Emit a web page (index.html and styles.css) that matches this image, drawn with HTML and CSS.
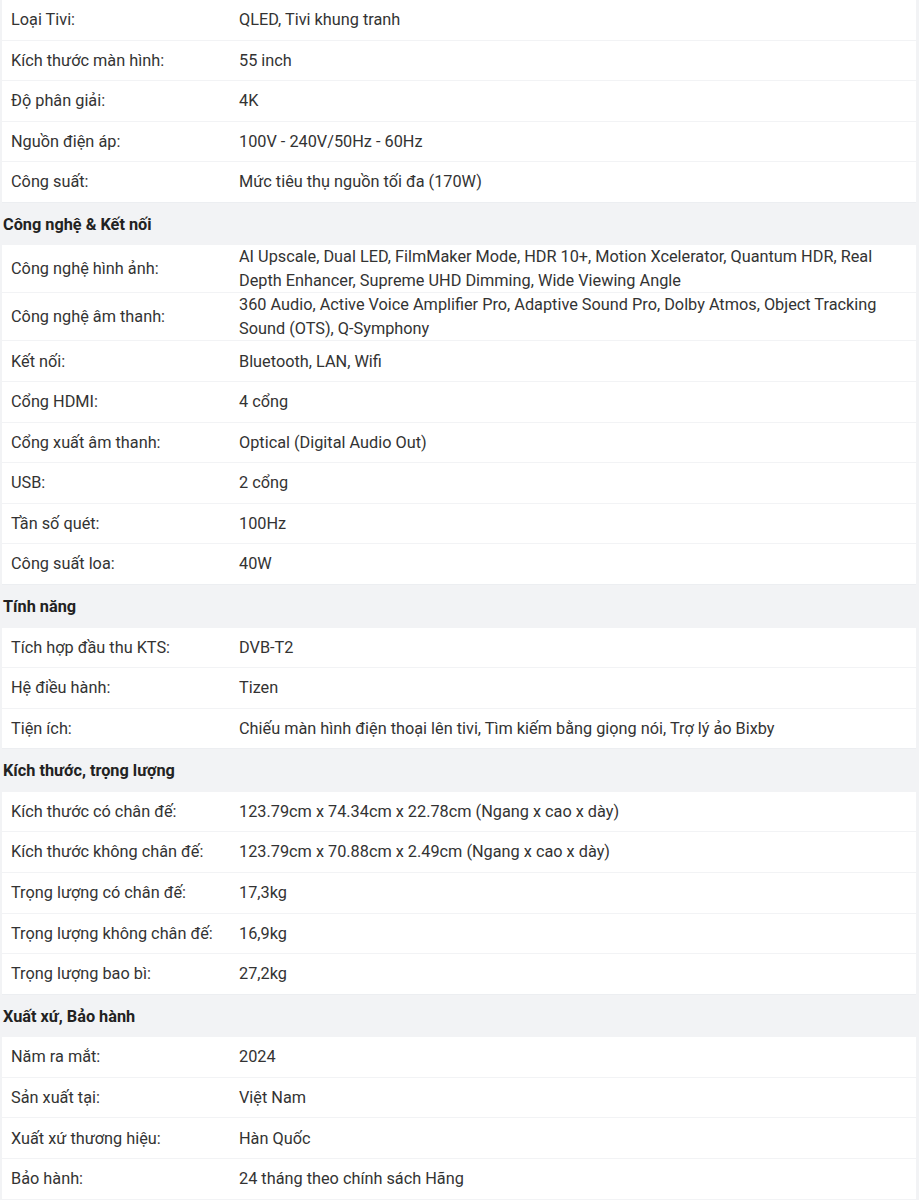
FILE: index.html
```html
<!DOCTYPE html>
<html lang="vi">
<head>
<meta charset="utf-8">
<title>Thông số kỹ thuật</title>
<link rel="stylesheet" href="styles.css">
</head>
<body>
<div class="specs">
  <ul class="group">
    <li class="row"><span class="label">Loại Tivi:</span><span class="value">QLED, Tivi khung tranh</span></li>
    <li class="row"><span class="label">Kích thước màn hình:</span><span class="value">55 inch</span></li>
    <li class="row"><span class="label">Độ phân giải:</span><span class="value">4K</span></li>
    <li class="row"><span class="label">Nguồn điện áp:</span><span class="value">100V - 240V/50Hz - 60Hz</span></li>
    <li class="row"><span class="label">Công suất:</span><span class="value">Mức tiêu thụ nguồn tối đa (170W)</span></li>
  </ul>
  <h3 class="title">Công nghệ &amp; Kết nối</h3>
  <ul class="group">
    <li class="row"><span class="label">Công nghệ hình ảnh:</span><span class="value">AI Upscale, Dual LED, FilmMaker Mode, HDR 10+, Motion Xcelerator, Quantum HDR, Real Depth Enhancer, Supreme UHD Dimming, Wide Viewing Angle</span></li>
    <li class="row"><span class="label">Công nghệ âm thanh:</span><span class="value">360 Audio, Active Voice Amplifier Pro, Adaptive Sound Pro, Dolby Atmos, Object Tracking Sound (OTS), Q-Symphony</span></li>
    <li class="row"><span class="label">Kết nối:</span><span class="value">Bluetooth, LAN, Wifi</span></li>
    <li class="row"><span class="label">Cổng HDMI:</span><span class="value">4 cổng</span></li>
    <li class="row"><span class="label">Cổng xuất âm thanh:</span><span class="value">Optical (Digital Audio Out)</span></li>
    <li class="row"><span class="label">USB:</span><span class="value">2 cổng</span></li>
    <li class="row"><span class="label">Tần số quét:</span><span class="value">100Hz</span></li>
    <li class="row"><span class="label">Công suất loa:</span><span class="value">40W</span></li>
  </ul>
  <h3 class="title">Tính năng</h3>
  <ul class="group">
    <li class="row"><span class="label">Tích hợp đầu thu KTS:</span><span class="value">DVB-T2</span></li>
    <li class="row"><span class="label">Hệ điều hành:</span><span class="value">Tizen</span></li>
    <li class="row"><span class="label">Tiện ích:</span><span class="value">Chiếu màn hình điện thoại lên tivi, Tìm kiếm bằng giọng nói, Trợ lý ảo Bixby</span></li>
  </ul>
  <h3 class="title">Kích thước, trọng lượng</h3>
  <ul class="group">
    <li class="row"><span class="label">Kích thước có chân đế:</span><span class="value">123.79cm x 74.34cm x 22.78cm (Ngang x cao x dày)</span></li>
    <li class="row"><span class="label">Kích thước không chân đế:</span><span class="value">123.79cm x 70.88cm x 2.49cm (Ngang x cao x dày)</span></li>
    <li class="row"><span class="label">Trọng lượng có chân đế:</span><span class="value">17,3kg</span></li>
    <li class="row"><span class="label">Trọng lượng không chân đế:</span><span class="value">16,9kg</span></li>
    <li class="row"><span class="label">Trọng lượng bao bì:</span><span class="value">27,2kg</span></li>
  </ul>
  <h3 class="title">Xuất xứ, Bảo hành</h3>
  <ul class="group">
    <li class="row"><span class="label">Năm ra mắt:</span><span class="value">2024</span></li>
    <li class="row"><span class="label">Sản xuất tại:</span><span class="value">Việt Nam</span></li>
    <li class="row"><span class="label">Xuất xứ thương hiệu:</span><span class="value">Hàn Quốc</span></li>
    <li class="row"><span class="label">Bảo hành:</span><span class="value">24 tháng theo chính sách Hãng</span></li>
  </ul>
</div>
</body>
</html>
```

FILE: styles.css
```css
* { box-sizing: border-box; }

html, body {
  margin: 0;
  padding: 0;
  background: #f2f3f5;
}

body {
  font-family: Roboto, "Noto Sans", "Liberation Sans", sans-serif;
  font-size: 16.3px;
  color: #333333;
}

.specs {
  width: 919px;
  padding: 0 3px 0 2px;
}

.group {
  list-style: none;
  margin: 0;
  padding: 0;
  display: flex;
  flex-direction: column;
  gap: 1px;
}

.row {
  display: flex;
  align-items: center;
  min-height: 39.6px;
  padding: 0 10px 0 9px;
  background: #ffffff;
  line-height: 23.5px;
}

.label {
  flex: 0 0 228px;
}

.value {
  flex: 1 1 auto;
}

.title {
  margin: 0;
  height: 43.5px;
  padding: 0 0 0 1px;
  display: flex;
  align-items: center;
  font-size: 16.3px;
  font-weight: 700;
  color: #222222;
  border-top: 1px solid #eceef1;
}
```
